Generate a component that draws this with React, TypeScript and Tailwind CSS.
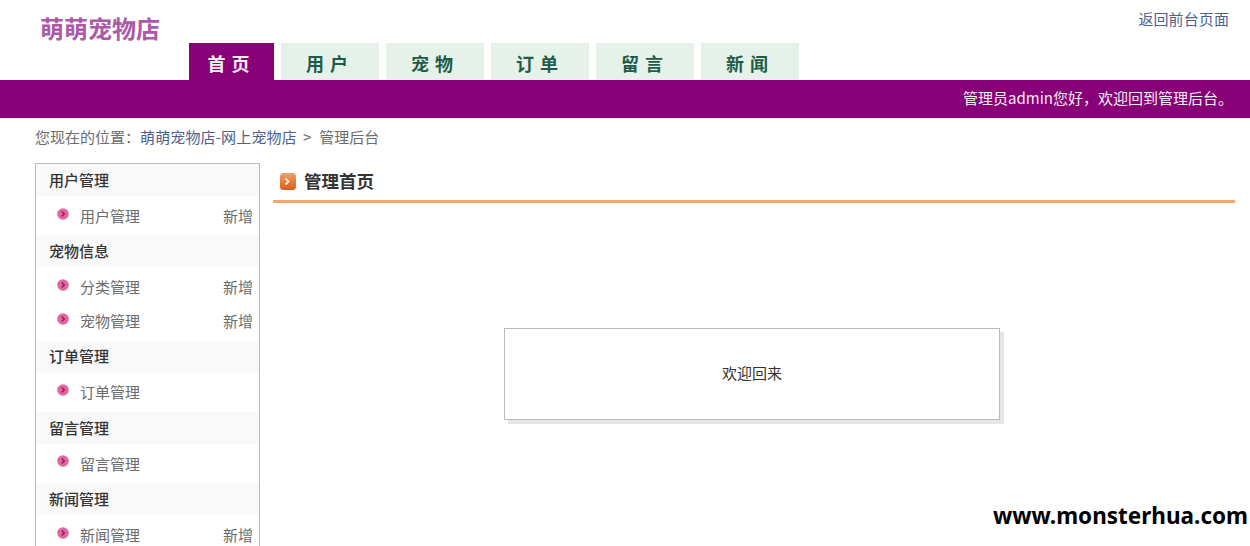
const tabs = ['首页', '用户', '宠物', '订单', '留言', '新闻']

const groups = [
  { title: '用户管理', items: [{ name: '用户管理', add: true }] },
  { title: '宠物信息', items: [{ name: '分类管理', add: true }, { name: '宠物管理', add: true }] },
  { title: '订单管理', items: [{ name: '订单管理', add: false }] },
  { title: '留言管理', items: [{ name: '留言管理', add: false }] },
  { title: '新闻管理', items: [{ name: '新闻管理', add: true }] },
]

function Bullet() {
  return (
    <svg viewBox="0 0 12 12" className="h-3 w-3 shrink-0">
      <circle cx="6" cy="6" r="5.8" fill="#e4659f" />
      <path d="M4.7 3.5 7.2 6 4.7 8.5" fill="none" stroke="#8a2a5c" strokeWidth="1.7" />
    </svg>
  )
}

function TitleIcon() {
  return (
    <svg viewBox="0 0 16 17" className="h-[17px] w-4 shrink-0">
      <defs>
        <linearGradient id="orange" x1="0" y1="0" x2="0" y2="1">
          <stop offset="0" stopColor="#eea468" />
          <stop offset="1" stopColor="#d95d1a" />
        </linearGradient>
      </defs>
      <rect width="16" height="17" rx="3.5" fill="url(#orange)" />
      <path d="M5.5 5.5 8.5 8.5 5.5 11.5" fill="none" stroke="#fff" strokeWidth="1.6" />
    </svg>
  )
}

export default function App() {
  return (
    <div className="relative h-[546px] overflow-hidden bg-white text-[15px] text-[#6c6c6c] font-['Noto_Sans_CJK_SC','Liberation_Sans',sans-serif]">
      <header className="flex h-20 items-start">
        <div className="w-[189px] shrink-0 pl-[40px] pt-[11px] text-2xl font-bold leading-[34px] text-[#ac5aa8]">
          萌萌宠物店
        </div>
        <nav className="mt-[43px] flex gap-[7px]">
          {tabs.map((tab, i) => (
            <a
              key={tab}
              className={`flex h-[37px] items-center justify-center pt-[4px] text-[18px] font-bold tracking-[6px] ${
                i === 0 ? 'w-[85px] bg-[#880077] text-[#f5ecf3]' : 'w-[98px] bg-[#e6f2e9] text-[#1d5c4a]'
              }`}
            >
              {tab}
            </a>
          ))}
        </nav>
        <a className="ml-auto mr-[21px] mt-[9px] leading-[20px] tracking-[0.1px] text-[#4d5f8c]">返回前台页面</a>
      </header>

      <div className="flex h-[38px] items-center justify-end bg-[#880077] pb-[2px] pr-[17px] text-[#f8eef6]">
        管理员admin您好，欢迎回到管理后台。
      </div>

      <div className="flex h-10 items-center pb-[2px] pl-[35px]">
        您现在的位置：<a className="tracking-[0.15px] text-[#4d5f8c]">萌萌宠物店-网上宠物店</a>
        <span className="ml-[6px] mr-[8px]">&gt;</span>管理后台
      </div>

      <div className="mt-[5px] flex items-start pl-[35px] pr-[15px]">
        <aside className="w-[225px] shrink-0 border border-[#bbb]">
          {groups.map(group => (
            <div key={group.title}>
              <h3 className="flex h-8 items-center bg-[#f9f9f9] pl-[13px] font-medium text-[#333]">{group.title}</h3>
              <ul className="pb-[2.25px] pt-[3px]">
                {group.items.map(item => (
                  <li key={item.name} className="flex h-[34px] items-center pl-[21px] pr-[6px]">
                    <span className="-mt-[5px]">
                      <Bullet />
                    </span>
                    <a className="ml-[11px]">{item.name}</a>
                    {item.add && <a className="ml-auto">新增</a>}
                  </li>
                ))}
              </ul>
            </div>
          ))}
        </aside>

        <main className="ml-[13px] flex-1">
          <div className="flex h-[40px] items-center gap-2 border-b-[3px] border-[#f0a96c] pl-[7px]">
            <span className="-mt-[1px]">
              <TitleIcon />
            </span>
            <h2 className="text-[17.5px] font-bold text-[#333]">管理首页</h2>
          </div>
          <div className="ml-[231px] mt-[125px] flex h-[92px] w-[496px] items-center justify-center border border-[#bbb] bg-white pb-[2px] text-[#333] shadow-[4px_4px_0_#e6e6e6]">
            欢迎回来
          </div>
        </main>
      </div>

      <div className="absolute bottom-[15px] right-[2px] font-['Noto_Sans','Liberation_Sans',sans-serif] text-[22.5px] font-bold leading-[30px] text-black">
        www.monsterhua.com
      </div>
    </div>
  )
}
